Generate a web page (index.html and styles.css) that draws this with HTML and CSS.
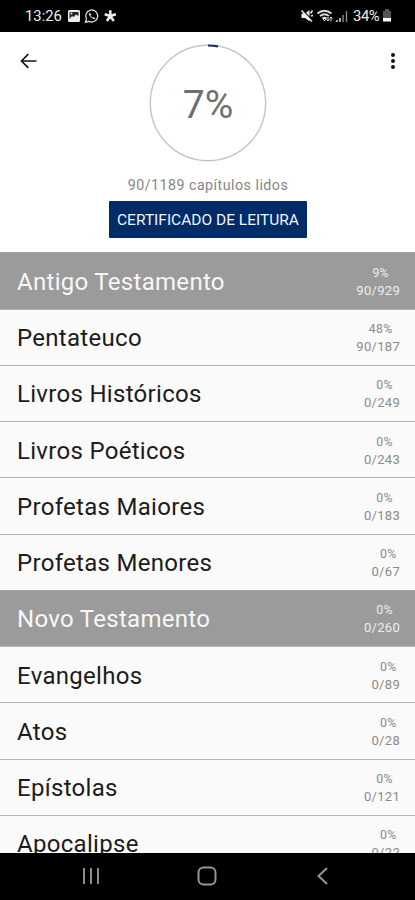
FILE: index.html
```html
<!DOCTYPE html>
<html lang="pt">
<head>
<meta charset="utf-8">
<meta name="viewport" content="width=device-width">
<title>Progresso de leitura</title>
<link rel="stylesheet" href="styles.css">
</head>
<body>
<div class="phone">
  <header class="status">
    <span class="clock">13:26</span>
    <svg class="status-left" width="52" height="16" viewBox="0 0 52 16">
      <rect x="1" y="2" width="12" height="12" rx="1.5" fill="#ededed"/>
      <path d="M2.500 11V4h9v4L9 6.500 6.500 9 5 8z" fill="#222"/>
      <circle cx="4.500" cy="5.500" r="1" fill="#eee"/>
      <path d="M18.500 14.300l1-3.400a6 6 0 1 1 2.500 2.400z" fill="none" stroke="#ddd" stroke-width="1.300"/>
      <path d="M22.500 4.800c-1.200 1-.4 2.600 1.400 4.500 2 1.900 3.600 2.300 4.500 1.200l-1.700-1.400-1.100.7-2-2 .7-1.200z" fill="#ddd"/>
      <path d="M43.300 8V2.200M43.300 8l-5.600-1.700M43.300 8l5.600-1.700M43.300 8l-3.500 5M43.300 8l3.500 5" fill="none" stroke="#eee" stroke-width="2.500"/>
    </svg>
    <svg class="status-right" width="50" height="16" viewBox="0 0 50 16">
      <path d="M1.500 5.500H5L9.500 2v11.500L5 10H1.500z" fill="#eee"/>
      <path d="M2.500 2l10.500 11" stroke="#000" stroke-width="1.200"/>
      <path d="M1.500 2.500l10.500 11M10.500 5.500l2-3M11 8l2-.5" stroke="#eee" stroke-width="1.500"/>
      <path d="M17.500 5.500q7-5.500 14 0M20 8q4.500-3.500 9 0M22.500 10.500q2-1.500 4 0" fill="none" stroke="#ddd" stroke-width="1.900"/>
      <path d="M23 10.500h3l-1.500 2.500zM28 9v4M26.500 11.500l1.500 1.500 1.500-1.500M31 13.500v-4M29.500 10.500l1.500-1.500 1.500 1.500" fill="none" stroke="#ddd"/>
      <path d="M37 12v2M40 10v4" stroke="#ddd" stroke-width="1.500"/>
      <path d="M43 7v7M46.500 3v11" stroke="#888" stroke-width="1.400"/>
    </svg>
    <span class="charge">34%</span>
    <svg class="battery" width="10" height="14" viewBox="0 0 10 14">
      <path d="M3 0h4v2h2v7H1V2h2z" fill="#555"/>
      <path d="M1 9h8v3.500H1z" fill="#fff"/>
    </svg>
  </header>
  <main class="screen">
    <section class="summary">
      <svg class="back" width="20" height="20" viewBox="0 0 20 20"><path d="M17.500 10H3M9.300 3.200L2.500 10l6.800 6.800" fill="none" stroke="#171717" stroke-width="1.700"/></svg>
      <div class="progress">
        <svg class="ring" width="118" height="118" viewBox="0 0 118 118">
          <circle cx="59" cy="59" r="57.700" fill="none" stroke="#c4c4c4" stroke-width="1.400"/>
          <path d="M59 1.500A57.500 57.500 0 0 1 69 2.400" fill="none" stroke="#1b2d68" stroke-width="2.200"/>
          <text class="ring-value" x="59" y="74" text-anchor="middle">7%</text>
        </svg>
        <p class="chapters">90/1189 capítulos lidos</p>
        <button class="certificate">CERTIFICADO DE LEITURA</button>
      </div>
      <svg class="more" width="8" height="20" viewBox="0 0 8 20"><g fill="#111"><circle cx="4" cy="4" r="2"/><circle cx="4" cy="10" r="2"/><circle cx="4" cy="16" r="2"/></g></svg>
    </section>
    <ul class="books">
      <li class="row heading"><span class="name">Antigo Testamento</span><span class="count"><span class="pct">9%</span><span>90/929</span></span></li>
      <li class="row"><span class="name">Pentateuco</span><span class="count"><span class="pct">48%</span><span>90/187</span></span></li>
      <li class="row"><span class="name">Livros Históricos</span><span class="count"><span class="pct">0%</span><span>0/249</span></span></li>
      <li class="row"><span class="name">Livros Poéticos</span><span class="count"><span class="pct">0%</span><span>0/243</span></span></li>
      <li class="row"><span class="name">Profetas Maiores</span><span class="count"><span class="pct">0%</span><span>0/183</span></span></li>
      <li class="row"><span class="name">Profetas Menores</span><span class="count"><span class="pct">0%</span><span>0/67</span></span></li>
      <li class="row heading"><span class="name">Novo Testamento</span><span class="count"><span class="pct">0%</span><span>0/260</span></span></li>
      <li class="row"><span class="name">Evangelhos</span><span class="count"><span class="pct">0%</span><span>0/89</span></span></li>
      <li class="row"><span class="name">Atos</span><span class="count"><span class="pct">0%</span><span>0/28</span></span></li>
      <li class="row"><span class="name">Epístolas</span><span class="count"><span class="pct">0%</span><span>0/121</span></span></li>
      <li class="row"><span class="name">Apocalipse</span><span class="count"><span class="pct">0%</span><span>0/22</span></span></li>
    </ul>
  </main>
  <nav class="navbar">
    <svg width="20" height="20" viewBox="0 0 20 20"><path d="M3 2v16M10 2v16M17 2v16" stroke="#8c8c8c" stroke-width="2"/></svg>
    <svg width="20" height="20" viewBox="0 0 20 20"><rect x="1.500" y="1.500" width="17" height="17" rx="5" fill="none" stroke="#969696" stroke-width="2"/></svg>
    <svg width="20" height="20" viewBox="0 0 20 20"><path d="M14 2L5.500 10l8.500 8" fill="none" stroke="#969696" stroke-width="2"/></svg>
  </nav>
</div>
</body>
</html>
```
FILE: styles.css
```css
* { box-sizing: border-box; }
body { margin: 0; font-family: Roboto, "Liberation Sans", sans-serif; }
.phone {
  width: 415px;
  height: 900px;
  display: flex;
  flex-direction: column;
  overflow: hidden;
  background: #000;
}
.status {
  flex: none;
  height: 32px;
  display: flex;
  align-items: center;
  padding: 0 23px 0 25px;
  color: #eee;
  font-size: 14.8px;
}
.clock { width: 42px; }
.status-right { margin-left: auto; }
.charge { width: 29px; margin-left: 3px; letter-spacing: -0.4px; white-space: nowrap; }
.screen { flex: 1; min-height: 0; overflow: hidden; background: #fafafa; }
.summary {
  height: 220.3px;
  display: grid;
  grid-template-columns: 1fr auto 1fr;
  align-items: start;
  padding: 12px 18px 0 19px;
  background: #fff;
}
.back, .more { margin-top: 7px; }
.more { justify-self: end; }
.progress { display: flex; flex-direction: column; align-items: center; }
.ring { display: block; }
.ring-value { font-size: 39px; fill: #6f6f6f; }
.chapters {
  margin: 14px 0 7px;
  font-size: 14.200px;
  line-height: 18px;
  letter-spacing: 0.5px;
  color: #858585;
}
.certificate {
  width: 198px;
  height: 37px;
  padding: 0;
  border: 0;
  border-radius: 1px;
  background: #002b69;
  color: #f2f5fa;
  font: 15.5px Roboto, "Liberation Sans", sans-serif;
  white-space: nowrap;
}
.books { margin: 0; padding: 0; list-style: none; }
.row {
  height: 56.25px;
  display: flex;
  align-items: center;
  justify-content: space-between;
  padding: 2px 15px 0 17px;
  border-top: 1px solid #b5b5b5;
  color: #1c1c1c;
}
.name { font-size: 24px; letter-spacing: 0.3px; }
.count {
  display: flex;
  flex-direction: column;
  align-items: center;
  font-size: 13px;
  line-height: 18px;
  letter-spacing: 0.3px;
  color: #8b8b8b;
}
.pct { font-size: 12.300px; padding-left: 5px; }
.heading { background: #9b9b9b; border-color: #a2a2a2; color: #f7f7f7; }
.heading .count { color: #ededed; }
.navbar {
  flex: none;
  height: 47.500px;
  display: flex;
  justify-content: space-between;
  align-items: center;
  padding: 0 82px 0 81px;
}
```
